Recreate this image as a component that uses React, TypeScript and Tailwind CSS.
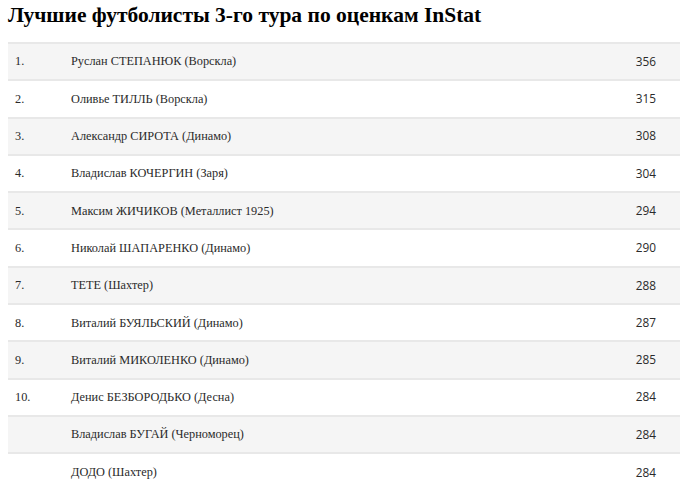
const rows = [
  { n: "1.", name: "Руслан СТЕПАНЮК (Ворскла)", score: 356 },
  { n: "2.", name: "Оливье ТИЛЛЬ (Ворскла)", score: 315 },
  { n: "3.", name: "Александр СИРОТА (Динамо)", score: 308 },
  { n: "4.", name: "Владислав КОЧЕРГИН (Заря)", score: 304 },
  { n: "5.", name: "Максим ЖИЧИКОВ (Металлист 1925)", score: 294 },
  { n: "6.", name: "Николай ШАПАРЕНКО (Динамо)", score: 290 },
  { n: "7.", name: "ТЕТЕ (Шахтер)", score: 288 },
  { n: "8.", name: "Виталий БУЯЛЬСКИЙ (Динамо)", score: 287 },
  { n: "9.", name: "Виталий МИКОЛЕНКО (Динамо)", score: 285 },
  { n: "10.", name: "Денис БЕЗБОРОДЬКО (Десна)", score: 284 },
  { n: "", name: "Владислав БУГАЙ (Черноморец)", score: 284 },
  { n: "", name: "ДОДО (Шахтер)", score: 284 },
]

export default function App() {
  return (
    <div className="min-h-screen bg-white pl-2 text-[#2a2a2a]" style={{ fontFamily: '"Liberation Serif", serif' }}>
      <h1 className="pt-[2px] text-[21.5px] font-bold leading-[26px] text-black">
        Лучшие футболисты 3-го тура по оценкам InStat
      </h1>

      <table className="mt-[14px] w-full border-collapse text-[12.3px]">
        <tbody>
          {rows.map((r, i) => (
            <tr key={i} className={`h-[37.3px] border-t-2 border-[#e8e8e8] ${i % 2 === 0 ? "bg-[#f5f5f5]" : "bg-white"}`}>
              <td className="w-[63px] pl-[7px] align-middle">{r.n}</td>
              <td className="align-middle">{r.name}</td>
              <td
                className="pr-[24px] text-right align-middle text-[11.8px]"
                style={{ fontFamily: '"Open Sans", sans-serif' }}
              >
                {r.score}
              </td>
            </tr>
          ))}
        </tbody>
      </table>
    </div>
  )
}
